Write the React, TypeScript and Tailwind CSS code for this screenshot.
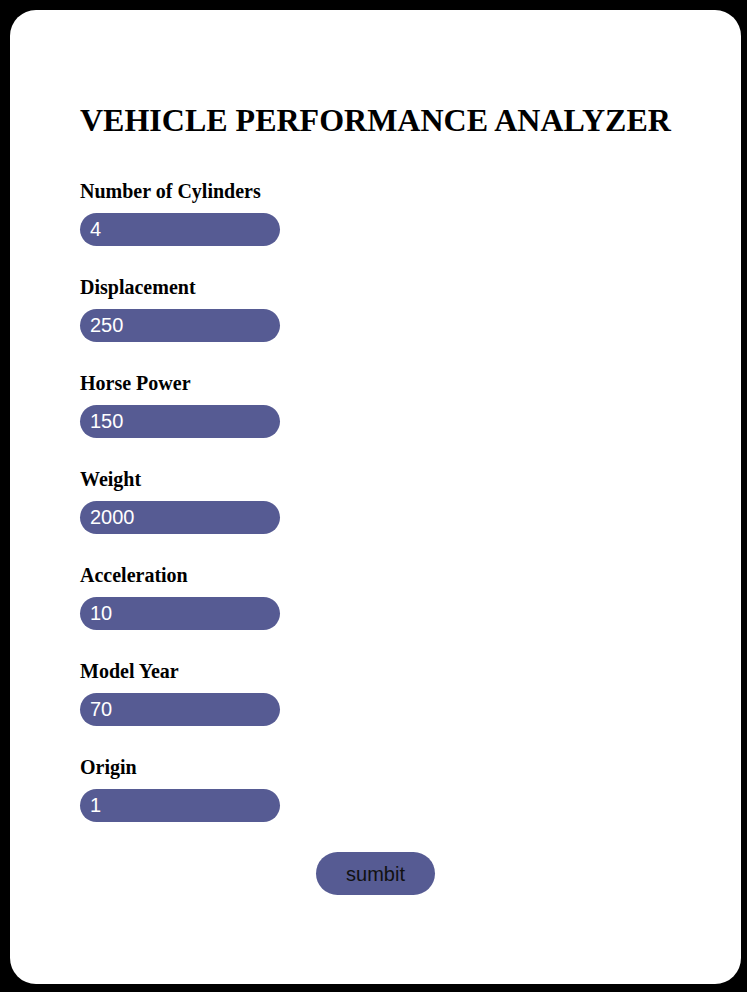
export default function App() {
  const fields = [
    { label: "Number of Cylinders", value: "4" },
    { label: "Displacement", value: "250" },
    { label: "Horse Power", value: "150" },
    { label: "Weight", value: "2000" },
    { label: "Acceleration", value: "10" },
    { label: "Model Year", value: "70" },
    { label: "Origin", value: "1" },
  ];

  return (
    <div className="bg-black min-h-[992px] pt-[10px] pl-[10px]">
      <div className="bg-white w-[731px] h-[974px] rounded-[26px] pl-[70px] pt-[92px]">
        <h1 className="font-['Liberation_Serif',serif] font-bold text-[32px] leading-[36px] text-black">
          VEHICLE PERFORMANCE ANALYZER
        </h1>
        <div className="mt-[42px] flex flex-col gap-[30px]">
          {fields.map((f) => (
            <div key={f.label} className="flex flex-col gap-[11px]">
              <label className="font-['Liberation_Serif',serif] font-bold text-[20px] leading-[22px] text-black">
                {f.label}
              </label>
              <input
                defaultValue={f.value}
                className="w-[200px] h-[33px] rounded-full bg-[#565b93] text-white pl-[10px] font-['Liberation_Sans',Arial,sans-serif] text-[20px] outline-none"
              />
            </div>
          ))}
        </div>
        <div className="w-[591px] flex justify-center mt-[30px]">
          <button className="h-[43px] w-[119px] rounded-full bg-[#565b93] text-[#111] font-['Liberation_Sans',Arial,sans-serif] text-[20px]">
            sumbit
          </button>
        </div>
      </div>
    </div>
  );
}
